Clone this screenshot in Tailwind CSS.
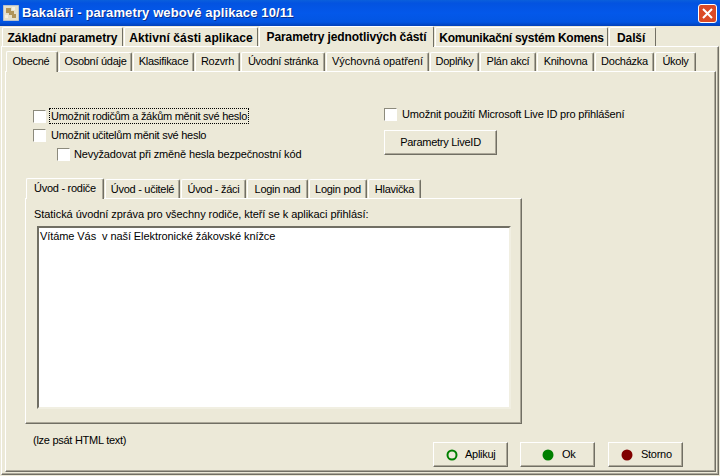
<!DOCTYPE html>
<html lang="cs">
<head>
  <meta charset="UTF-8">
  <script src="https://cdn.jsdelivr.net/npm/@tailwindcss/browser@4"></script>
  <title>Bakaláři - parametry webové aplikace 10/11</title>
</head>
<body class="w-[720px] h-[476px] overflow-hidden bg-[#ece9d8] font-['Liberation_Sans',sans-serif] text-[11px] tracking-[-0.27px] text-black flex flex-col">

  <!-- Title bar -->
  <div class="h-[26px] shrink-0 flex items-center pl-[3px] pr-[3px] bg-[linear-gradient(180deg,#0a5fdc_0%,#0353e0_12%,#0358ea_50%,#0255e2_85%,#0240b8_100%)]">
    <svg width="16" height="16" viewBox="0 0 16 16" class="shrink-0">
      <rect width="16" height="16" fill="#e4dfcc"/>
      <path d="M3 3h5v3h3v3h2v4H9v-3H6V8H3z" fill="#b0945a"/>
      <path d="M9 2h3v3H9zM2 10h3v3H2z" fill="#f5f0e0"/>
      <path d="M0 0h16v16H0z" fill="none" stroke="#8fa4c8" stroke-width="1"/>
    </svg>
    <span class="ml-[3px] text-white font-bold text-[13px] tracking-[0.12px] [text-shadow:1px_1px_0_#0a2f8f]">Bakaláři - parametry webové aplikace 10/11</span>
    <div class="ml-auto w-[19px] h-[19px] rounded-[3px] border border-white bg-[#db4a26] flex items-center justify-center">
      <svg width="11" height="11" viewBox="0 0 11 11"><path d="M1 1l9 9M10 1l-9 9" stroke="#fff" stroke-width="2"/></svg>
    </div>
  </div>

  <!-- Main tabs -->
  <div class="h-[20px] shrink-0 flex items-end pl-[2px] gap-px text-[12px] font-bold tracking-[-0.1px] relative z-10">
    <div class="w-[121px] h-[19px] pt-px tracking-[0px] flex items-center justify-center whitespace-nowrap border-t border-l border-white border-r border-r-[#716f64] rounded-t-[2px]">Základní parametry</div>
    <div class="w-[134px] h-[19px] pt-px tracking-[0.1px] flex items-center justify-center whitespace-nowrap border-t border-l border-white border-r border-r-[#716f64] rounded-t-[2px]">Aktivní části aplikace</div>
    <div class="w-[175px] h-[21px] -mb-px bg-[#ece9d8] flex items-start pt-px justify-center whitespace-nowrap border-t border-l border-white border-r border-r-[#716f64] rounded-t-[2px]">Parametry jednotlivých částí</div>
    <div class="w-[173px] h-[19px] pt-px tracking-[-0.25px] flex items-center justify-center whitespace-nowrap border-t border-l border-white border-r border-r-[#716f64] rounded-t-[2px]">Komunikační systém Komens</div>
    <div class="w-[47px] h-[19px] pt-px flex items-center pl-[7px] whitespace-nowrap border-t border-l border-white border-r border-r-[#716f64] rounded-t-[2px]">Další</div>
  </div>

  <!-- Main panel -->
  <div class="ml-[1px] mr-[1px] h-[429px] shrink-0 border-t border-l border-white border-r border-b border-r-[#716f64] border-b-[#716f64] shadow-[inset_-1px_-1px_0_#aca899] pt-[4px] pl-[3px] pr-[2px]">

    <!-- Sub tabs -->
    <div class="h-[20px] flex items-end pl-[1px] gap-px relative z-10">
      <div class="w-[52px] h-[21px] -mb-px bg-[#ece9d8] pt-px pr-[2px] text-center border-t border-l border-white border-r border-r-[#716f64] shadow-[inset_-1px_0_0_#aca899] rounded-t-[2px]">Obecné</div>
      <div class="w-[73px] h-[19px] pb-px flex items-center justify-center whitespace-nowrap border-t border-l border-white border-r border-r-[#716f64] shadow-[inset_-1px_0_0_#aca899] rounded-t-[2px]">Osobní údaje</div>
      <div class="w-[61px] h-[19px] pb-px flex items-center justify-center whitespace-nowrap border-t border-l border-white border-r border-r-[#716f64] shadow-[inset_-1px_0_0_#aca899] rounded-t-[2px]">Klasifikace</div>
      <div class="w-[45px] h-[19px] pb-px flex items-center justify-center whitespace-nowrap border-t border-l border-white border-r border-r-[#716f64] shadow-[inset_-1px_0_0_#aca899] rounded-t-[2px]">Rozvrh</div>
      <div class="w-[84px] h-[19px] pb-px flex items-center justify-center whitespace-nowrap border-t border-l border-white border-r border-r-[#716f64] shadow-[inset_-1px_0_0_#aca899] rounded-t-[2px]">Úvodní stránka</div>
      <div class="w-[103px] h-[19px] pb-px tracking-[-0.05px] flex items-center justify-center whitespace-nowrap border-t border-l border-white border-r border-r-[#716f64] shadow-[inset_-1px_0_0_#aca899] rounded-t-[2px]">Výchovná opatření</div>
      <div class="w-[49px] h-[19px] pb-px flex items-center justify-center whitespace-nowrap border-t border-l border-white border-r border-r-[#716f64] shadow-[inset_-1px_0_0_#aca899] rounded-t-[2px]">Doplňky</div>
      <div class="w-[56px] h-[19px] pb-px flex items-center justify-center whitespace-nowrap border-t border-l border-white border-r border-r-[#716f64] shadow-[inset_-1px_0_0_#aca899] rounded-t-[2px]">Plán akcí</div>
      <div class="w-[57px] h-[19px] pb-px flex items-center justify-center whitespace-nowrap border-t border-l border-white border-r border-r-[#716f64] shadow-[inset_-1px_0_0_#aca899] rounded-t-[2px]">Knihovna</div>
      <div class="w-[59px] h-[19px] pb-px flex items-center justify-center whitespace-nowrap border-t border-l border-white border-r border-r-[#716f64] shadow-[inset_-1px_0_0_#aca899] rounded-t-[2px]">Docházka</div>
      <div class="w-[41px] h-[19px] pb-px flex items-center justify-center whitespace-nowrap border-t border-l border-white border-r border-r-[#716f64] shadow-[inset_-1px_0_0_#aca899] rounded-t-[2px]">Úkoly</div>
    </div>

    <!-- Sub panel -->
    <div class="h-[401px] border-t border-l border-white border-r border-b border-r-[#716f64] border-b-[#716f64] shadow-[inset_-1px_-1px_0_#aca899] pl-[19px] pt-[30px]">

      <div class="h-[76px] flex">
        <div class="w-[351px] ml-[8px] pt-[6px]">
          <div class="h-[16px] flex items-center gap-[3px]">
            <span class="w-[13px] h-[13px] bg-white border border-t-[#8c8a7c] border-l-[#8c8a7c] border-r-white border-b-white"></span>
            <span class="h-[16px] leading-[14px] px-px border border-dotted border-black whitespace-nowrap">Umožnit rodičům a žákům měnit své heslo</span>
          </div>
          <div class="mt-[3px] h-[16px] flex items-center gap-[5px]">
            <span class="w-[13px] h-[13px] bg-white border border-t-[#8c8a7c] border-l-[#8c8a7c] border-r-white border-b-white"></span>
            <span class="whitespace-nowrap">Umožnit učitelům měnit své heslo</span>
          </div>
          <div class="mt-[3px] ml-[24px] h-[16px] flex items-center gap-[4px]">
            <span class="w-[13px] h-[13px] bg-white border border-t-[#8c8a7c] border-l-[#8c8a7c] border-r-white border-b-white"></span>
            <span class="tracking-[-0.14px] whitespace-nowrap">Nevyžadovat při změně hesla bezpečnostní kód</span>
          </div>
        </div>
        <div class="pt-[4px]">
          <div class="h-[16px] flex items-center gap-[5px]">
            <span class="w-[13px] h-[13px] bg-white border border-t-[#8c8a7c] border-l-[#8c8a7c] border-r-white border-b-white"></span>
            <span class="tracking-[-0.17px] whitespace-nowrap">Umožnit použití Microsoft Live ID pro přihlášení</span>
          </div>
          <div class="mt-[8px] w-[113px] h-[25px] flex items-center justify-center border border-t-white border-l-white border-r-[#716f64] border-b-[#716f64] shadow-[inset_-1px_-1px_0_#aca899]">Parametry LiveID</div>
        </div>
      </div>

      <!-- Inner tabs -->
      <div class="h-[20px] flex items-end pl-[1px] gap-px relative z-10">
        <div class="w-[78px] h-[21px] -mb-px bg-[#ece9d8] pt-px text-center border-t border-l border-white border-r border-r-[#716f64] shadow-[inset_-1px_0_0_#aca899] rounded-t-[2px]">Úvod - rodiče</div>
        <div class="w-[75px] h-[19px] flex items-center justify-center whitespace-nowrap border-t border-l border-white border-r border-r-[#716f64] shadow-[inset_-1px_0_0_#aca899] rounded-t-[2px]">Úvod - učitelé</div>
        <div class="w-[65px] h-[19px] flex items-center justify-center whitespace-nowrap border-t border-l border-white border-r border-r-[#716f64] shadow-[inset_-1px_0_0_#aca899] rounded-t-[2px]">Úvod - žáci</div>
        <div class="w-[61px] h-[19px] flex items-center justify-center whitespace-nowrap border-t border-l border-white border-r border-r-[#716f64] shadow-[inset_-1px_0_0_#aca899] rounded-t-[2px]">Login nad</div>
        <div class="w-[58px] h-[19px] flex items-center justify-center whitespace-nowrap border-t border-l border-white border-r border-r-[#716f64] shadow-[inset_-1px_0_0_#aca899] rounded-t-[2px]">Login pod</div>
        <div class="w-[53px] h-[19px] flex items-center justify-center whitespace-nowrap border-t border-l border-white border-r border-r-[#716f64] shadow-[inset_-1px_0_0_#aca899] rounded-t-[2px]">Hlavička</div>
      </div>

      <!-- Inner panel -->
      <div class="w-[497px] h-[226px] border-t border-l border-white border-r border-b border-r-[#716f64] border-b-[#716f64] shadow-[inset_-1px_-1px_0_#aca899] pl-[8px] pt-[8px]">
        <div class="h-[14px] leading-[14px] tracking-[-0.06px] whitespace-nowrap">Statická úvodní zpráva pro všechny rodiče, kteří se k aplikaci přihlásí:</div>
        <div class="mt-[5px] ml-[3px] w-[474px] h-[183px] bg-white border-2 border-t-[#716f64] border-l-[#716f64] border-r-[#f1efe2] border-b-[#f1efe2] px-px pt-px leading-[14px] tracking-[-0.08px] whitespace-pre">Vítáme Vás  v naší Elektronické žákovské knížce</div>
      </div>

      <!-- Footer -->
      <div class="flex items-start">
        <div class="mt-[8px] ml-[8px] w-[400px]">(lze psát HTML text)</div>
        <div class="mt-[18px] flex">
          <div class="w-[75px] h-[25px] flex items-center border border-t-white border-l-white border-r-[#716f64] border-b-[#716f64] shadow-[inset_-1px_-1px_0_#aca899] pl-[12px] gap-[7px]">
            <svg width="12" height="12" viewBox="0 0 12 12"><circle cx="6" cy="6" r="4.5" fill="none" stroke="#008000" stroke-width="2"/></svg>Aplikuj
          </div>
          <div class="ml-[12px] w-[75px] h-[25px] flex items-center border border-t-white border-l-white border-r-[#716f64] border-b-[#716f64] shadow-[inset_-1px_-1px_0_#aca899] pl-[21px] gap-[8px]">
            <svg width="12" height="12" viewBox="0 0 12 12"><circle cx="6" cy="6" r="5.5" fill="#008000"/></svg>Ok
          </div>
          <div class="ml-[13px] w-[75px] h-[25px] flex items-center border border-t-white border-l-white border-r-[#716f64] border-b-[#716f64] shadow-[inset_-1px_-1px_0_#aca899] pl-[12px] gap-[8px]">
            <svg width="12" height="12" viewBox="0 0 12 12"><circle cx="6" cy="6" r="5.5" fill="#800000"/></svg>Storno
          </div>
        </div>
      </div>
    </div>
  </div>
</body>
</html>
